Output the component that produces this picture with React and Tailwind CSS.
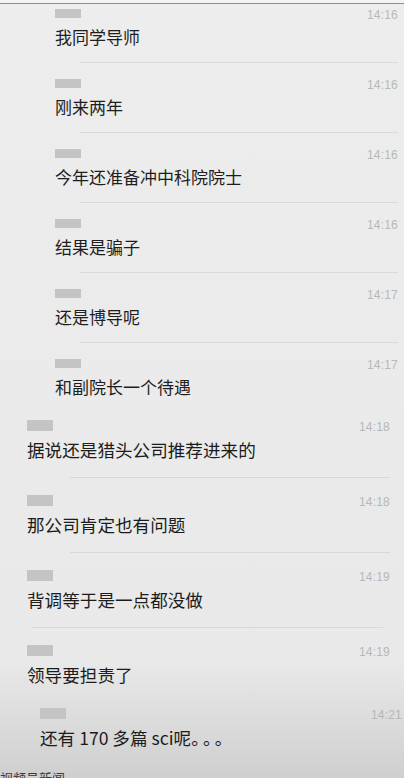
import React from "react";

const FONT = { fontFamily: '"Noto Sans CJK SC", "Noto Sans", sans-serif' };
const TIME_FONT = { fontFamily: '"Liberation Sans", Arial, sans-serif' };

function Name({ className }) {
  return <div className={"bg-[#c4c4c4] blur-[0.6px] " + className} />;
}

function G1({ time, text, sep = true, last = false }) {
  return (
    <div className={"flex flex-col pl-[55px] pr-[6px] " + (last ? "" : "h-[70px]")}>
      <div className="flex justify-between items-start pt-[7px] h-[19px]">
        <Name className="w-[26px] h-[9px] mt-[2px]" />
        <span style={TIME_FONT} className="text-[12px] leading-[12px] mt-[2px] text-[#b8b8b8] tracking-[0.2px]">
          {time}
        </span>
      </div>
      <div className="mt-[6px] text-[17px] leading-[24px] text-[#1e1e1e]">{text}</div>
      {sep && <div className="mt-[13px] ml-[25px] h-px bg-[#dadada]" />}
    </div>
  );
}

function G2({ time, children, pl = "pl-[27px]", pr = "pr-[14px]", sepClass = "ml-[43px]", sep = true, pt = "pt-[17px]" }) {
  return (
    <div className={"flex flex-col " + pl + " " + pr}>
      <div className={"flex justify-between items-start h-[12px] box-content " + pt}>
        <Name className="w-[26px] h-[11px]" />
        <span style={TIME_FONT} className="text-[12px] leading-[12px] mt-[1px] text-[#b7b7b7] tracking-[0.2px]">
          {time}
        </span>
      </div>
      <div className="mt-[5px] text-[17.6px] leading-[26px] text-[#1c1c1c]">{children}</div>
      {sep && <div className={"mt-[14px] h-px bg-[#d8d8d8] " + sepClass} />}
    </div>
  );
}

export default function App() {
  return (
    <div
      style={FONT}
      className="relative w-[404px] h-[778px] overflow-hidden bg-linear-to-b from-[#ededed] via-[#e9e9e9] via-85% to-[#cfcfcf]"
    >
      <div className="absolute left-0 right-0 top-0 h-[3px] bg-[#f3f3f3]" />
      <div className="absolute left-0 right-0 top-[3px] h-[1px] bg-[#8e8e8e]" />

      <G1 time="14:16" text="我同学导师" />
      <G1 time="14:16" text="刚来两年" />
      <G1 time="14:16" text="今年还准备冲中科院院士" />
      <G1 time="14:16" text="结果是骗子" />
      <G1 time="14:17" text="还是博导呢" />
      <G1 time="14:17" text="和副院长一个待遇" sep={false} last />

      <div className="h-[4px]" />
      <G2 time="14:18">据说还是猎头公司推荐进来的</G2>
      <G2 time="14:18">那公司肯定也有问题</G2>
      <G2 time="14:19" sepClass="ml-[5px] mr-[7px]">背调等于是一点都没做</G2>
      <G2 time="14:19" sep={false}>领导要担责了</G2>
      <G2 time="14:21" pl="pl-[40px]" pr="pr-[2px]" pt="pt-[20px]" sep={false}>
        还有 170 多篇 sci呢<span className="tracking-[3px]">。。。</span>
      </G2>

      <div className="absolute left-0 top-[770px] text-[13px] leading-[16px] text-[#3a3a3a] whitespace-nowrap">
        视频号新闻
      </div>
    </div>
  );
}
